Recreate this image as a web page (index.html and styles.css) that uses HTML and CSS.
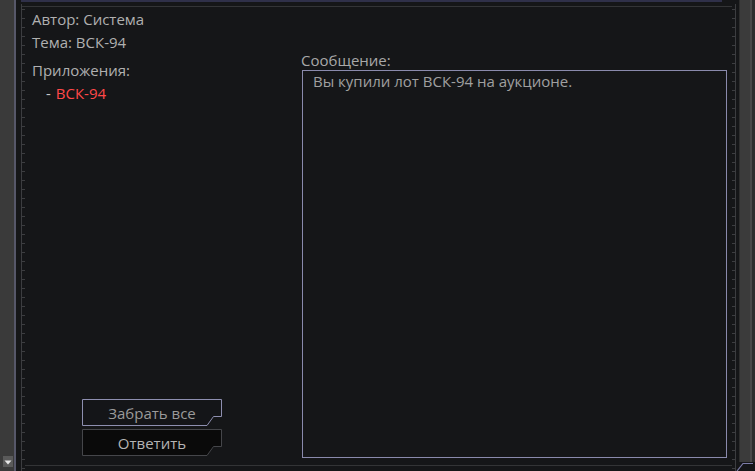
FILE: index.html
```html
<!DOCTYPE html>
<html lang="ru">
<head>
<meta charset="utf-8">
<title>Сообщение</title>
<link rel="stylesheet" href="styles.css">
</head>
<body>
<div class="screen">
  <div class="rail rail-left">
    <div class="rail-body"></div>
    <div class="rail-btn">
      <svg width="10" height="10" viewBox="0 0 10 10"><path d="M1.5 3.5 H8.5 L5 7.5 Z" fill="#e8e8e8"/></svg>
    </div>
    <div class="rail-tail"></div>
  </div>
  <div class="ticks ticks-left"></div>
  <div class="main">
    <div class="topbar"></div>
    <div class="toprule"></div>
    <div class="content">
      <div class="meta">
        <div class="line">Автор: Система</div>
        <div class="line">Тема: ВСК-94</div>
        <div class="line attach-title">Приложения:</div>
        <div class="line attach"><span class="dash">-</span><span class="item">ВСК-94</span></div>
        <div class="actions">
          <button class="btn btn-primary">
            <svg class="btn-shape" viewBox="0 0 140 27" preserveAspectRatio="none"><path d="M0.5 0.5 H139.5 V17.5 H131.5 L125 26.5 H0.5 Z"/></svg>
            <span class="btn-label">Забрать все</span>
          </button>
          <button class="btn btn-dark">
            <svg class="btn-shape" viewBox="0 0 140 27" preserveAspectRatio="none"><path d="M0.5 0.5 H139.5 V17.5 H131.5 L125 26.5 H0.5 Z"/></svg>
            <span class="btn-label">Ответить</span>
          </button>
        </div>
      </div>
      <div class="message">
        <div class="label">Сообщение:</div>
        <div class="msgbox">Вы купили лот ВСК-94 на аукционе.</div>
      </div>
    </div>
    <div class="bottomrule"></div>
  </div>
  <div class="ticks ticks-right"></div>
  <div class="rail rail-right">
    <div class="rail-body"></div>
    <div class="rail-foot">
      <svg width="17" height="9" viewBox="0 0 17 9"><path d="M1 9 L7 1.5 H17" fill="none" stroke="#7c7ca8" stroke-width="1.2"/></svg>
    </div>
  </div>
</div>
</body>
</html>
```

FILE: styles.css
```css
* { box-sizing: border-box; }
html, body {
  margin: 0;
  padding: 0;
  background: #151618;
}
body {
  font-family: "Open Sans", "Noto Sans", sans-serif;
  font-size: 15px;
  color: #b0b0b0;
}
.screen {
  display: flex;
  width: 755px;
  height: 471px;
  overflow: hidden;
  background: #151618;
}

/* left rail */
.rail-left {
  width: 16px;
  flex: none;
  display: flex;
  flex-direction: column;
  background: #3a3a3a;
  border-right: 2px solid #565769;
}
.rail-left .rail-body { flex: 1; }
.rail-btn {
  width: 10px;
  height: 11px;
  margin-left: 3px;
  background: #5a5a5a;
  display: flex;
  align-items: center;
  justify-content: center;
}
.rail-tail { height: 4px; }

/* tick lines */
.ticks {
  flex: none;
  width: 4px;
  margin-top: 4px;
}
.ticks-left {
  margin-left: 5px;
  border-left: 1px solid #3c3d40;
  background-image: repeating-linear-gradient(to bottom, transparent 0 5px, #3c3d40 5px 6px, transparent 6px 9px);
  background-size: 3px 100%;
  background-repeat: no-repeat;
}
.ticks-right {
  border-right: 1px solid #3c3d40;
  background-image: repeating-linear-gradient(to bottom, transparent 0 5px, #3c3d40 5px 6px, transparent 6px 9px);
  background-size: 3px 100%;
  background-position: right top;
  background-repeat: no-repeat;
}

/* main */
.main {
  flex: none;
  width: 707px;
  display: flex;
  flex-direction: column;
}
.topbar {
  height: 2px;
  margin-left: -4px;
  width: 701px;
  background: #2f3049;
}
.toprule {
  height: 1px;
  margin-top: 4px;
  margin-left: -3px;
  width: 710px;
  background: #333436;
}
.content {
  flex: 1;
  display: flex;
  padding: 0 5px 7px 7px;
}
.meta {
  width: 269px;
  display: flex;
  flex-direction: column;
  padding-top: 1px;
  padding-bottom: 2px;
}
.line {
  line-height: 23px;
  height: 23px;
  color: #b0b0b0;
}
.attach-title { margin-top: 5px; }
.attach { padding-left: 14px; }
.dash { color: #c8c8c8; margin-right: 5px; }
.item { color: #ff4848; }

.actions {
  margin-top: auto;
  margin-left: 50px;
  display: flex;
  flex-direction: column;
  gap: 3px;
}
.btn {
  position: relative;
  width: 140px;
  height: 27px;
  padding: 0;
  border: 0;
  background: transparent;
  font: inherit;
  font-size: 15px;
  display: flex;
  align-items: center;
  justify-content: center;
}
.btn-shape {
  position: absolute;
  inset: 0;
  width: 100%;
  height: 100%;
}
.btn-primary .btn-shape path { fill: #141518; stroke: #8e8fb0; stroke-width: 1; }
.btn-dark .btn-shape path { fill: #0a0a0a; stroke: #45464a; stroke-width: 1; }
.btn-label { position: relative; }
.btn-primary .btn-label { color: #9a9a9a; }
.btn-dark .btn-label { color: #b4b4b4; }

.message {
  width: 426px;
  display: flex;
  flex-direction: column;
  padding-top: 43px;
}
.label {
  line-height: 20px;
  height: 20px;
  color: #a8a8a8;
}
.msgbox {
  flex: 1;
  margin-left: 1px;
  border: 1px solid #8a8aac;
  padding: 0 10px;
  line-height: 20px;
  color: #a0a0a0;
}
.bottomrule {
  height: 1px;
  margin-bottom: 5px;
  background: #333436;
}

/* right rail */
.rail-right {
  flex: none;
  width: 19px;
  display: flex;
  flex-direction: column;
  padding-left: 3px;
}
.rail-right .rail-body {
  flex: 1;
  background: #3b3b3b;
  border-left: 1px solid #2e2e2e;
  border-right: 3px solid #2f2f2f;
  box-shadow: inset -2px 0 0 #4a4a4a;
}
.rail-foot {
  height: 9px;
  margin-left: -3px;
}
.rail-foot svg { display: block; }
```
